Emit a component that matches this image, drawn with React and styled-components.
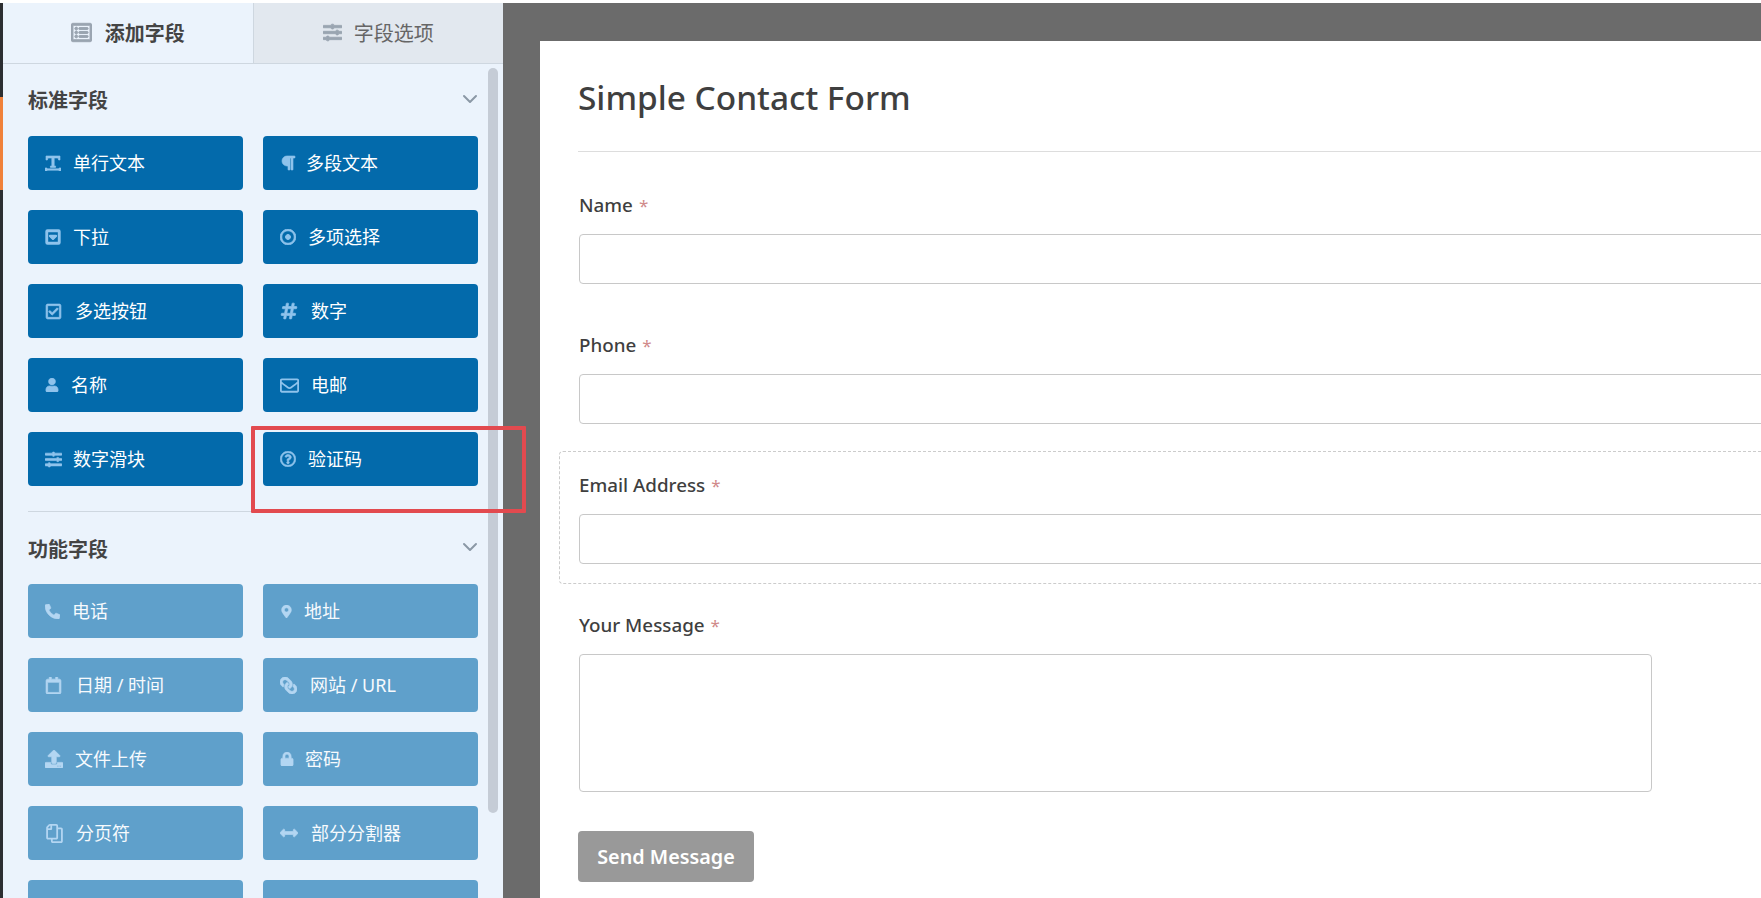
import React from "react"
import styled, { createGlobalStyle } from "styled-components"
import {
    FaArrowsAltH,
    FaHashtag,
    FaLink,
    FaLock,
    FaMapMarkerAlt,
    FaParagraph,
    FaPhoneAlt,
    FaRegCalendar,
    FaRegCaretSquareDown,
    FaRegCheckSquare,
    FaRegCopy,
    FaRegDotCircle,
    FaRegEnvelope,
    FaRegListAlt,
    FaRegQuestionCircle,
    FaSlidersH,
    FaUpload,
    FaUser,
} from "react-icons/fa"
import { FiChevronDown } from "react-icons/fi"

const fontStack = `"Noto Sans", "Noto Sans CJK SC", sans-serif`

const GlobalStyle = createGlobalStyle`
    html, body {
        margin: 0;
        height: 100%;
        background: #fff;
        overflow: hidden;
    }
    * {
        box-sizing: border-box;
    }
    body {
        font-family: ${fontStack};
    }
`

const Shell = styled.div`
    position: relative;
    display: flex;
    width: 1761px;
    height: 895px;
    margin-top: 3px;
    overflow: hidden;
`

const AdminStrip = styled.div`
    flex: none;
    width: 3px;
    padding-top: 94px;
    background: #2c2e31;
`

const ActiveMark = styled.div`
    height: 93px;
    background: #f0813a;
`

const Sidebar = styled.aside`
    position: relative;
    flex: none;
    width: 500px;
    height: 100%;
    background: #ebf3fc;
    overflow: hidden;
`

const Tabs = styled.div`
    display: flex;
    height: 61px;
    border-bottom: 1px solid #ced7e0;
`

const Tab = styled.div`
    display: flex;
    flex: 1;
    align-items: center;
    justify-content: center;
    gap: ${(p) => (p.$active ? "13px" : "12px")};
    padding-bottom: 1px;
    background: ${(p) => (p.$active ? "#ebf3fc" : "#e2e8ef")};
    border-left: ${(p) => (p.$active ? "none" : "1px solid #ced7e0")};
    color: ${(p) => (p.$active ? "#444" : "#666")};
    font-size: 20px;
    font-weight: ${(p) => (p.$active ? 700 : 400)};

    svg {
        width: ${(p) => (p.$active ? "21px" : "19px")};
        height: auto;
        color: #9aa5b1;
        stroke: currentColor;
        stroke-width: 24;
    }
`

const Section = styled.section`
    padding: 0 25px 25px;
`

const SectionDivider = styled.hr`
    height: 1px;
    margin: 0 25px;
    border: 0;
    background: #ced7e0;
`

const SectionHeader = styled.div`
    display: flex;
    align-items: center;
    justify-content: space-between;
    height: 72px;
    padding-top: ${(p) => (p.$second ? "1px" : "0")};
    padding-bottom: ${(p) => (p.$second ? "0" : "2px")};
    color: #444;
    font-size: 20px;
    font-weight: 700;

    svg {
        width: 24px;
        height: 24px;
        margin: 0 -4px ${(p) => (p.$second ? "4px" : "0")} 0;
        color: #8b98a6;
    }
`

const FieldGrid = styled.div`
    display: grid;
    grid-template-columns: 215px 215px;
    grid-auto-rows: 54px;
    gap: 20px;
`

const FieldButton = styled.div`
    display: flex;
    align-items: center;
    padding: 0 0 2px 17px;
    border-radius: 4px;
    background: #036aab;
    color: #fff;
    font-size: 18px;
    opacity: ${(p) => (p.$muted ? 0.6 : 1)};
`

const IconSlot = styled.span`
    display: flex;
    flex: none;
    align-items: center;
    width: ${(p) => p.$slot}px;
    padding-top: 2px;
    color: #8fc3ec;

    svg {
        width: ${(p) => p.$width}px;
        height: auto;
        stroke: currentColor;
        stroke-width: ${(p) => p.$weight ?? 20};
        transform: ${(p) => (p.$flip ? "scaleX(-1)" : "none")};
    }
`

const Scrollbar = styled.div`
    position: absolute;
    top: 65px;
    left: 485px;
    width: 10px;
    height: 745px;
    border-radius: 5px;
    background: #c5ccd6;
`

const Canvas = styled.main`
    flex: 1;
    min-width: 0;
    padding: 38px 0 0 37px;
    background: #6b6b6b;
    overflow: hidden;
`

const FormCard = styled.div`
    width: 1300px;
    height: 900px;
    padding-left: 19px;
    background: #fff;
`

const FormTitle = styled.h1`
    height: 111px;
    margin: 0 0 19px 19px;
    padding-top: 33px;
    border-bottom: 1px solid #ddd;
    color: #3f3f3f;
    font-size: 33.4px;
    font-weight: 500;
    line-height: 46px;
`

const Field = styled.div`
    height: ${(p) => (p.$tall ? "221px" : "133px")};
    margin-bottom: 7px;
    padding: 19px;
    border: 1px ${(p) => (p.$selected ? "dashed #ccc" : "solid transparent")};
    border-radius: 4px;
`

const Label = styled.label`
    display: block;
    height: 43px;
    color: #3f3f3f;
    font-size: 18.8px;
    font-weight: 500;
    line-height: 28px;
`

const Required = styled.span`
    margin-left: 6px;
    color: #d08a8a;
    font-size: 17px;
    font-weight: 400;
`

const Input = styled.div`
    height: ${(p) => (p.$tall ? "138px" : "50px")};
    width: ${(p) => (p.$tall ? "1073px" : "100%")};
    border: 1px solid #c8c8c8;
    border-radius: 4px;
    background: #fff;
`

const SendButton = styled.div`
    display: flex;
    align-items: center;
    justify-content: center;
    width: 176px;
    height: 51px;
    margin: 19px 0 0 19px;
    border-radius: 4px;
    background: #999;
    color: #fff;
    font-size: 19.8px;
    font-weight: 600;
`

const Highlight = styled.div`
    position: absolute;
    top: 423px;
    left: 251px;
    width: 275px;
    height: 87px;
    border: 4px solid #e24a4f;
    border-radius: 1px;
    pointer-events: none;
`

// the package only has the arrowed version of this one
const TextLineIcon = () => (
    <svg viewBox="0 0 512 512" fill="currentColor">
        <path d="M32 32h448v128h-45l-16-64H294v256h45v45H173v-45h45V96H93l-16 64H32z" />
        <path d="M0 416h64v26h384v-26h64v96h-64v-26H64v26H0z" />
    </svg>
)

const standardFields = [
    { label: "单行文本", Icon: TextLineIcon, slot: 28, width: 16 },
    { label: "多段文本", Icon: FaParagraph, slot: 26, width: 16 },
    { label: "下拉", Icon: FaRegCaretSquareDown, slot: 28, width: 16, weight: 44 },
    { label: "多项选择", Icon: FaRegDotCircle, slot: 28, width: 16, weight: 30 },
    { label: "多选按钮", Icon: FaRegCheckSquare, slot: 30, width: 17 },
    { label: "数字", Icon: FaHashtag, slot: 31, width: 18 },
    { label: "名称", Icon: FaUser, slot: 26, width: 14 },
    { label: "电邮", Icon: FaRegEnvelope, slot: 31, width: 19, weight: 0 },
    { label: "数字滑块", Icon: FaSlidersH, slot: 28, width: 17 },
    { label: "验证码", Icon: FaRegQuestionCircle, slot: 28, width: 16 },
]

const fancyFields = [
    { label: "电话", Icon: FaPhoneAlt, slot: 27, width: 15 },
    { label: "地址", Icon: FaMapMarkerAlt, slot: 24, width: 13 },
    { label: "日期 / 时间", Icon: FaRegCalendar, slot: 31, width: 17 },
    { label: "网站 / URL", Icon: FaLink, slot: 30, width: 17, flip: true },
    { label: "文件上传", Icon: FaUpload, slot: 30, width: 18 },
    { label: "密码", Icon: FaLock, slot: 25, width: 14 },
    { label: "分页符", Icon: FaRegCopy, slot: 31, width: 19, flip: true, weight: 0 },
    { label: "部分分割器", Icon: FaArrowsAltH, slot: 31, width: 18 },
    {},
    {},
]

const formFields = [
    { label: "Name" },
    { label: "Phone" },
    { label: "Email Address", selected: true },
    { label: "Your Message", tall: true },
]

function FieldButtons({ fields, muted }) {
    return (
        <FieldGrid>
            {fields.map(({ label, Icon, slot, width, flip, weight }, i) => (
                <FieldButton key={i} $muted={muted}>
                    {Icon && (
                        <IconSlot $slot={slot} $width={width} $flip={flip} $weight={weight}>
                            <Icon />
                        </IconSlot>
                    )}
                    {label}
                </FieldButton>
            ))}
        </FieldGrid>
    )
}

export default function App() {
    return (
        <Shell>
            <GlobalStyle />
            <AdminStrip>
                <ActiveMark />
            </AdminStrip>
            <Sidebar>
                <Tabs>
                    <Tab $active>
                        <FaRegListAlt />
                        添加字段
                    </Tab>
                    <Tab>
                        <FaSlidersH />
                        字段选项
                    </Tab>
                </Tabs>
                <Section>
                    <SectionHeader>
                        标准字段
                        <FiChevronDown />
                    </SectionHeader>
                    <FieldButtons fields={standardFields} />
                </Section>
                <SectionDivider />
                <Section>
                    <SectionHeader $second>
                        功能字段
                        <FiChevronDown />
                    </SectionHeader>
                    <FieldButtons fields={fancyFields} muted />
                </Section>
                <Scrollbar />
            </Sidebar>
            <Canvas>
                <FormCard>
                    <FormTitle>Simple Contact Form</FormTitle>
                    {formFields.map(({ label, selected, tall }) => (
                        <Field key={label} $selected={selected} $tall={tall}>
                            <Label>
                                {label}
                                <Required>*</Required>
                            </Label>
                            <Input $tall={tall} />
                        </Field>
                    ))}
                    <SendButton>Send Message</SendButton>
                </FormCard>
            </Canvas>
            <Highlight />
        </Shell>
    )
}
